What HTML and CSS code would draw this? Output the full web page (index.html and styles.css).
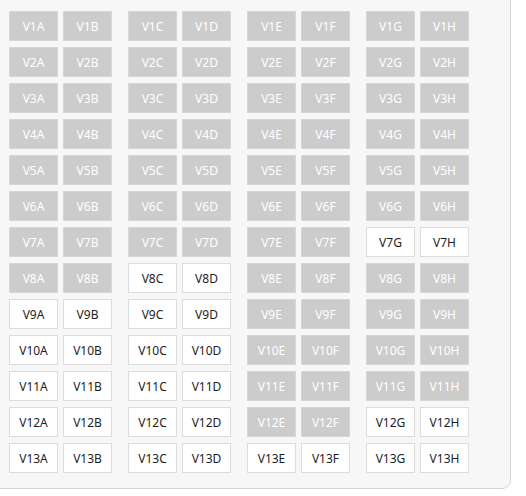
FILE: index.html
```html
<!DOCTYPE html>
<html lang="en">
<head>
  <meta charset="UTF-8">
  <meta name="viewport" content="width=device-width, initial-scale=1.0">
  <title>Seat Map</title>
  <link rel="stylesheet" href="styles.css">
</head>
<body>
  <div class="seat-map">
    <div class="row">
      <div class="pair"><div class="seat taken">V1A</div><div class="seat taken">V1B</div></div>
      <div class="pair"><div class="seat taken">V1C</div><div class="seat taken">V1D</div></div>
      <div class="pair"><div class="seat taken">V1E</div><div class="seat taken">V1F</div></div>
      <div class="pair"><div class="seat taken">V1G</div><div class="seat taken">V1H</div></div>
    </div>
    <div class="row">
      <div class="pair"><div class="seat taken">V2A</div><div class="seat taken">V2B</div></div>
      <div class="pair"><div class="seat taken">V2C</div><div class="seat taken">V2D</div></div>
      <div class="pair"><div class="seat taken">V2E</div><div class="seat taken">V2F</div></div>
      <div class="pair"><div class="seat taken">V2G</div><div class="seat taken">V2H</div></div>
    </div>
    <div class="row">
      <div class="pair"><div class="seat taken">V3A</div><div class="seat taken">V3B</div></div>
      <div class="pair"><div class="seat taken">V3C</div><div class="seat taken">V3D</div></div>
      <div class="pair"><div class="seat taken">V3E</div><div class="seat taken">V3F</div></div>
      <div class="pair"><div class="seat taken">V3G</div><div class="seat taken">V3H</div></div>
    </div>
    <div class="row">
      <div class="pair"><div class="seat taken">V4A</div><div class="seat taken">V4B</div></div>
      <div class="pair"><div class="seat taken">V4C</div><div class="seat taken">V4D</div></div>
      <div class="pair"><div class="seat taken">V4E</div><div class="seat taken">V4F</div></div>
      <div class="pair"><div class="seat taken">V4G</div><div class="seat taken">V4H</div></div>
    </div>
    <div class="row">
      <div class="pair"><div class="seat taken">V5A</div><div class="seat taken">V5B</div></div>
      <div class="pair"><div class="seat taken">V5C</div><div class="seat taken">V5D</div></div>
      <div class="pair"><div class="seat taken">V5E</div><div class="seat taken">V5F</div></div>
      <div class="pair"><div class="seat taken">V5G</div><div class="seat taken">V5H</div></div>
    </div>
    <div class="row">
      <div class="pair"><div class="seat taken">V6A</div><div class="seat taken">V6B</div></div>
      <div class="pair"><div class="seat taken">V6C</div><div class="seat taken">V6D</div></div>
      <div class="pair"><div class="seat taken">V6E</div><div class="seat taken">V6F</div></div>
      <div class="pair"><div class="seat taken">V6G</div><div class="seat taken">V6H</div></div>
    </div>
    <div class="row">
      <div class="pair"><div class="seat taken">V7A</div><div class="seat taken">V7B</div></div>
      <div class="pair"><div class="seat taken">V7C</div><div class="seat taken">V7D</div></div>
      <div class="pair"><div class="seat taken">V7E</div><div class="seat taken">V7F</div></div>
      <div class="pair"><div class="seat">V7G</div><div class="seat">V7H</div></div>
    </div>
    <div class="row">
      <div class="pair"><div class="seat taken">V8A</div><div class="seat taken">V8B</div></div>
      <div class="pair"><div class="seat">V8C</div><div class="seat">V8D</div></div>
      <div class="pair"><div class="seat taken">V8E</div><div class="seat taken">V8F</div></div>
      <div class="pair"><div class="seat taken">V8G</div><div class="seat taken">V8H</div></div>
    </div>
    <div class="row">
      <div class="pair"><div class="seat">V9A</div><div class="seat">V9B</div></div>
      <div class="pair"><div class="seat">V9C</div><div class="seat">V9D</div></div>
      <div class="pair"><div class="seat taken">V9E</div><div class="seat taken">V9F</div></div>
      <div class="pair"><div class="seat taken">V9G</div><div class="seat taken">V9H</div></div>
    </div>
    <div class="row">
      <div class="pair"><div class="seat">V10A</div><div class="seat">V10B</div></div>
      <div class="pair"><div class="seat">V10C</div><div class="seat">V10D</div></div>
      <div class="pair"><div class="seat taken">V10E</div><div class="seat taken">V10F</div></div>
      <div class="pair"><div class="seat taken">V10G</div><div class="seat taken">V10H</div></div>
    </div>
    <div class="row">
      <div class="pair"><div class="seat">V11A</div><div class="seat">V11B</div></div>
      <div class="pair"><div class="seat">V11C</div><div class="seat">V11D</div></div>
      <div class="pair"><div class="seat taken">V11E</div><div class="seat taken">V11F</div></div>
      <div class="pair"><div class="seat taken">V11G</div><div class="seat taken">V11H</div></div>
    </div>
    <div class="row">
      <div class="pair"><div class="seat">V12A</div><div class="seat">V12B</div></div>
      <div class="pair"><div class="seat">V12C</div><div class="seat">V12D</div></div>
      <div class="pair"><div class="seat taken">V12E</div><div class="seat taken">V12F</div></div>
      <div class="pair"><div class="seat">V12G</div><div class="seat">V12H</div></div>
    </div>
    <div class="row">
      <div class="pair"><div class="seat">V13A</div><div class="seat">V13B</div></div>
      <div class="pair"><div class="seat">V13C</div><div class="seat">V13D</div></div>
      <div class="pair"><div class="seat">V13E</div><div class="seat">V13F</div></div>
      <div class="pair"><div class="seat">V13G</div><div class="seat">V13H</div></div>
    </div>
  </div>
</body>
</html>
```

FILE: styles.css
```css
body {
  margin: 0;
  background-color: #ffffff;
  font-family: "Noto Sans", "Open Sans", sans-serif;
  overflow: hidden;
}
.seat-map {
  box-sizing: border-box;
  width: 519px;
  margin: -10px 0 0 -8px;
  padding: 20px 16px 15px 16px;
  background-color: #f7f7f7;
  border: 1px solid #d4d4d4;
  border-radius: 9px;
  display: flex;
  flex-direction: column;
  gap: 6px;
}
.row {
  display: flex;
  gap: 16px;
}
.pair {
  display: flex;
  gap: 5px;
}
.seat {
  box-sizing: border-box;
  width: 49px;
  height: 30px;
  display: flex;
  align-items: center;
  justify-content: center;
  font-size: 12px;
  color: #1e1e1e;
  background-color: #ffffff;
  border: 1px solid #dcdcdc;
}
.seat.taken {
  background-color: #cccccc;
  border-color: #d6d6d6;
  color: #ffffff;
}
```
